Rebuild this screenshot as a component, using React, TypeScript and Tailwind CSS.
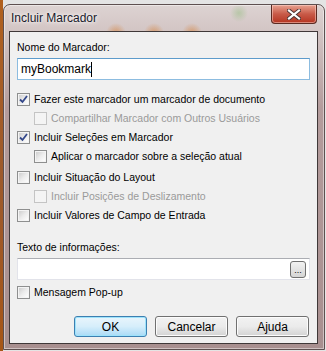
import { ReactNode } from 'react';

const Check = ({ checked, disabled }: { checked?: boolean; disabled?: boolean }) => (
  <span
    className={`w-[13px] h-[13px] border shrink-0 p-[1px] ${
      disabled ? 'border-[#c4c4c4] bg-[#f4f4f4]' : 'border-[#8e8f8f] bg-[#f4f4f4]'
    }`}
  >
    <span
      className={`block w-full h-full ${
        disabled ? 'bg-[#f4f4f4]' : 'bg-gradient-to-br from-[#cfcfcf] via-[#ececec] to-[#fdfdfd]'
      } flex items-center justify-center`}
    >
      {checked && (
        <svg width="9" height="9" viewBox="0 0 9 9">
          <path d="M1 4.5 L3.5 7 L8 1" fill="none" stroke="#34488a" strokeWidth="1.8" />
        </svg>
      )}
    </span>
  </span>
);

const Row = ({
  children,
  checked,
  disabled,
  indent,
  className = '',
}: {
  children: ReactNode;
  checked?: boolean;
  disabled?: boolean;
  indent?: boolean;
  className?: string;
}) => (
  <div className={`flex items-center h-[19px] gap-[4px] ${indent ? 'pl-[17px]' : ''} ${className}`}>
    <Check checked={checked} disabled={disabled} />
    <span className={disabled ? 'text-[#9a9a9a]' : 'text-black'}>{children}</span>
  </div>
);

const Btn = ({ label, primary }: { label: string; primary?: boolean }) => (
  <button
    className={`w-[73px] h-[21px] rounded-[3px] border text-[12px] leading-none ${
      primary
        ? 'border-[#3c7fb1] bg-gradient-to-b from-[#e9f5fc] via-[#d6eefb] to-[#a9daf6] shadow-[inset_0_0_0_1px_#9ee3fb]'
        : 'border-[#707070] bg-gradient-to-b from-[#f2f2f2] via-[#ebebeb] to-[#d3d3d3] shadow-[inset_0_0_0_1px_#fcfcfc]'
    }`}
  >
    {label}
  </button>
);

export default function App() {
  return (
    <div className="w-[326px] h-[351px] bg-[#e4e4e4] flex overflow-hidden font-['Liberation_Sans',Arial,sans-serif]">
      <div className="w-[3px] h-full bg-gradient-to-b from-[#b0601e] via-[#9d5a2c] to-[#a65616] shrink-0" />
      <div className="mt-[4px] w-[322px] h-[346px] rounded-t-[7px] border border-[#5e5050] bg-[radial-gradient(circle_at_112px_28px,rgba(214,120,40,0.55)_0,transparent_10px),radial-gradient(circle_at_150px_28px,rgba(214,120,40,0.55)_0,transparent_10px),radial-gradient(circle_at_188px_28px,rgba(214,120,40,0.55)_0,transparent_10px),radial-gradient(circle_at_235px_8px,rgba(150,190,130,0.5)_0,transparent_9px),linear-gradient(to_bottom,#ddd3d2,#b49c9c_30%,#a88f8f)] shadow-[inset_0_0_0_1px_rgba(255,255,255,0.45)] flex flex-col">
        <div className="h-[26px] flex items-start justify-between">
          <span className="ml-[7px] mt-[6px] text-[12px] leading-[14px] text-[#1a1a2a] [text-shadow:0_0_6px_#fff,0_0_3px_#fff]">
            Incluir Marcador
          </span>
          <div className="mr-[7px] w-[46px] h-[19px] rounded-b-[4px] border border-t-0 border-[#5a2a22] bg-gradient-to-b from-[#e7a190] via-[#c85a48] to-[#b5321e] flex items-center justify-center shadow-[inset_0_0_0_1px_rgba(255,220,210,0.5)]">
            <svg width="14" height="11" viewBox="0 0 14 11">
              <path d="M2 1.5 L12 9.5 M12 1.5 L2 9.5" stroke="#4a3232" strokeWidth="4" strokeLinecap="square" />
              <path d="M2 1.5 L12 9.5 M12 1.5 L2 9.5" stroke="#ffffff" strokeWidth="2.2" strokeLinecap="square" />
            </svg>
          </div>
        </div>
        <div className="ml-[5px] w-[309px] h-[313px] border border-[#3f3838] bg-[#f0f0f0] px-[7px] pt-[8px] text-[10.5px] flex flex-col">
          <div className="h-[14px] leading-[14px]">Nome do Marcador:</div>
          <div className="mt-[4px] h-[22px] border border-[#8cbce0] border-t-[#5d9bcb] bg-white flex items-center pl-[3px] text-[12px]">
            <span>myBookmark</span>
            <span className="w-[1px] h-[15px] bg-black" />
          </div>
          <div className="mt-[10px]">
            <Row checked>Fazer este marcador um marcador de documento</Row>
            <Row indent disabled>
              Compartilhar Marcador com Outros Usuários
            </Row>
            <Row checked>Incluir Seleções em Marcador</Row>
            <Row indent>Aplicar o marcador sobre a seleção atual</Row>
            <Row className="mt-[2px]">Incluir Situação do Layout</Row>
            <Row indent disabled>
              Incluir Posições de Deslizamento
            </Row>
            <Row>Incluir Valores de Campo de Entrada</Row>
          </div>
          <div className="mt-[15px] h-[14px] leading-[14px]">Texto de informações:</div>
          <div className="mt-[4px] h-[22px] border border-[#e2e3ea] border-t-[#abadb3] bg-white flex items-center justify-end pr-[3px]">
            <div className="w-[16px] h-[17px] rounded-[3px] border border-[#707070] bg-gradient-to-b from-[#f2f2f2] to-[#d5d5d5] flex items-end justify-center pb-[2px] text-[9px] leading-none">
              ...
            </div>
          </div>
          <Row className="mt-[3px]">Mensagem Pop-up</Row>
          <div className="mt-[14px] flex justify-end gap-[8px] pr-[1px]">
            <Btn label="OK" primary />
            <Btn label="Cancelar" />
            <Btn label="Ajuda" />
          </div>
        </div>
      </div>
    </div>
  );
}
